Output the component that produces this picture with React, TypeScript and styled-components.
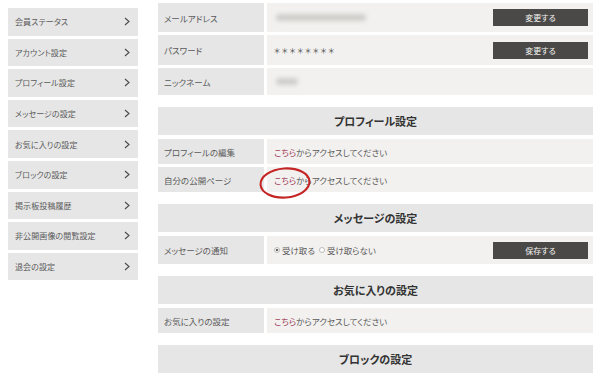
import styled, { createGlobalStyle } from "styled-components";

const GlobalStyle = createGlobalStyle`
  html, body {
    margin: 0;
    padding: 0;
    background: #ffffff;
  }
  body {
    font-family: "Noto Sans CJK JP", "Noto Sans", sans-serif;
    font-feature-settings: "palt";
    color: #555555;
  }
`;

const Page = styled.div`
  display: flex;
  align-items: flex-start;
  width: 602px;
  height: 378px;
  overflow: hidden;
`;

const SideMenu = styled.ul`
  list-style: none;
  margin: 8px 0 0 8px;
  padding: 0;
  width: 130px;
  display: flex;
  flex-direction: column;
  gap: 3px;
`;

const SideItem = styled.li`
  display: flex;
  align-items: center;
  justify-content: space-between;
  height: 27.6px;
  padding: 0 8px 0 7px;
  box-sizing: border-box;
  background-color: #e6e6e6;
  font-size: 8px;
  color: #5a5a5a;
  letter-spacing: 0.1px;
`;

const Chevron = () => (
  <svg width="6" height="9" viewBox="0 0 6 9">
    <polyline
      points="1,1 5,4.5 1,8"
      fill="none"
      stroke="#4a4a4a"
      strokeWidth="1.1"
    />
  </svg>
);

const Main = styled.div`
  margin-left: 20px;
  width: 435px;
  padding-top: 3px;
  display: flex;
  flex-direction: column;
`;

const Section = styled.section`
  display: flex;
  flex-direction: column;
  gap: 3px;
  margin-bottom: 12px;
`;

const SectionTitle = styled.h2`
  margin: 0 0 1px 0;
  height: 28px;
  display: flex;
  align-items: center;
  justify-content: center;
  background-color: #e6e6e6;
  font-size: 11px;
  font-weight: 700;
  color: #333333;
`;

const Row = styled.div<{ $h: number }>`
  display: grid;
  grid-template-columns: 106px 1fr;
  gap: 3px;
  height: ${(p) => p.$h}px;
`;

const Label = styled.div`
  display: flex;
  align-items: center;
  padding-left: 6px;
  background-color: #e6e6e6;
  font-size: 8.5px;
  color: #5a5a5a;
`;

const Value = styled.div`
  position: relative;
  display: flex;
  align-items: center;
  justify-content: space-between;
  padding: 0 5px 0 7px;
  background-color: #f2f1ef;
  font-size: 8.5px;
  color: #5a5a5a;
`;

const Blurred = styled.span<{ $w: number }>`
  display: inline-block;
  width: ${(p) => p.$w}px;
  height: 7px;
  margin-left: 2px;
  border-radius: 4px;
  background-color: #cfcdcb;
  filter: blur(2px);
`;

const Stars = styled.span`
  letter-spacing: 1.6px;
  font-size: 7.5px;
  color: #444444;
`;

const DarkButton = styled.button`
  width: 95px;
  height: 17px;
  border: none;
  padding: 0;
  background-color: #4b4947;
  color: #f4f4f4;
  font-family: inherit;
  font-feature-settings: "palt";
  font-size: 8px;
`;

const Link = styled.span`
  color: #a2405a;
`;

const Circle = styled.svg`
  position: absolute;
  left: -8px;
  top: 1px;
  overflow: visible;
`;

const Radios = styled.div`
  display: flex;
  align-items: center;
  gap: 4px;
`;

const RadioItem = styled.label`
  display: flex;
  align-items: center;
  gap: 2px;
`;

const RadioDot = styled.span<{ $on?: boolean }>`
  width: 6px;
  height: 6px;
  box-sizing: border-box;
  border-radius: 50%;
  border: 1px solid #bbbbbb;
  background: ${(p) =>
    p.$on ? "radial-gradient(circle, #666 0 1.4px, #fff 1.6px)" : "#ffffff"};
`;

const menu = [
  "会員ステータス",
  "アカウント設定",
  "プロフィール設定",
  "メッセージの設定",
  "お気に入りの設定",
  "ブロックの設定",
  "掲示板投稿履歴",
  "非公開画像の閲覧設定",
  "退会の設定",
];

const Access = ({ circled }: { circled?: boolean }) => (
  <Value>
    <span>
      <Link>こちら</Link>からアクセスしてください
    </span>
    {circled ? (
      <Circle width="52" height="30" viewBox="0 0 52 30">
        <ellipse
          cx="26"
          cy="15"
          rx="24.5"
          ry="14.5"
          fill="none"
          stroke="#c42626"
          strokeWidth="2.1"
          transform="rotate(-4 26 15)"
        />
      </Circle>
    ) : null}
  </Value>
);

const App = () => {
  return (
    <>
      <GlobalStyle />
      <Page>
        <SideMenu>
          {menu.map((m) => (
            <SideItem key={m}>
              <span>{m}</span>
              <Chevron />
            </SideItem>
          ))}
        </SideMenu>
        <Main>
          <Section>
            <Row $h={29}>
              <Label>メールアドレス</Label>
              <Value>
                <Blurred $w={90} />
                <DarkButton>変更する</DarkButton>
              </Value>
            </Row>
            <Row $h={30}>
              <Label>パスワード</Label>
              <Value>
                <Stars>＊＊＊＊＊＊＊＊</Stars>
                <DarkButton>変更する</DarkButton>
              </Value>
            </Row>
            <Row $h={27}>
              <Label>ニックネーム</Label>
              <Value>
                <Blurred $w={22} />
              </Value>
            </Row>
          </Section>

          <Section>
            <SectionTitle>プロフィール設定</SectionTitle>
            <Row $h={25}>
              <Label>プロフィールの編集</Label>
              <Access />
            </Row>
            <Row $h={25}>
              <Label>自分の公開ページ</Label>
              <Access circled />
            </Row>
          </Section>

          <Section>
            <SectionTitle>メッセージの設定</SectionTitle>
            <Row $h={28}>
              <Label>メッセージの通知</Label>
              <Value>
                <Radios>
                  <RadioItem>
                    <RadioDot $on />
                    受け取る
                  </RadioItem>
                  <RadioItem>
                    <RadioDot />
                    受け取らない
                  </RadioItem>
                </Radios>
                <DarkButton>保存する</DarkButton>
              </Value>
            </Row>
          </Section>

          <Section>
            <SectionTitle>お気に入りの設定</SectionTitle>
            <Row $h={25}>
              <Label>お気に入りの設定</Label>
              <Access />
            </Row>
          </Section>

          <Section>
            <SectionTitle>ブロックの設定</SectionTitle>
          </Section>
        </Main>
      </Page>
    </>
  );
};

export default App;
